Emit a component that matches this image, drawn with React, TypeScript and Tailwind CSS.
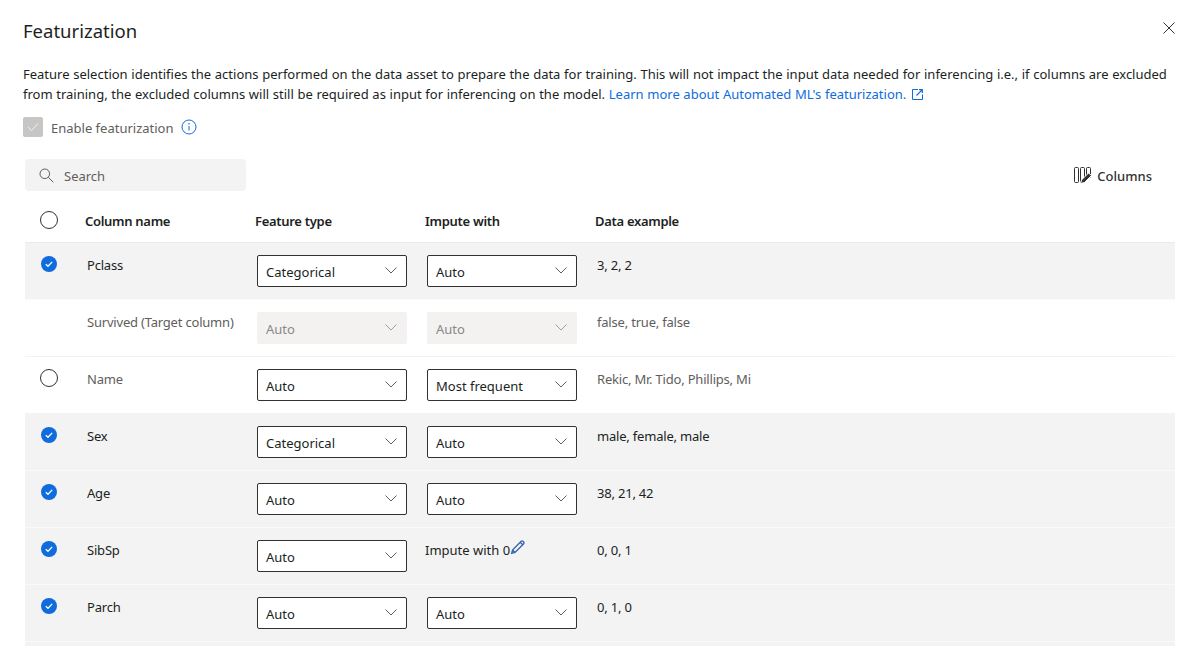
import React from "react";

const Chevron = () => (
  <svg width="12" height="7" viewBox="0 0 12 7" fill="none" className="-mt-[1px] block shrink-0">
    <path d="M.5.5l5.500 5.500 5.500-5.500" stroke="currentColor" strokeWidth="1" />
  </svg>
);

const Select = ({ value, disabled }: { value: string; disabled?: boolean }) => (
  <div
    className={
      disabled
        ? "flex h-[32px] w-[150px] items-center justify-between rounded-[2px] bg-[#f3f2f1] pl-[9px] pr-[10px] text-[#8a8886]"
        : "flex h-[32px] w-[150px] items-center justify-between rounded-[2px] border border-[#323130] bg-white pl-[8px] pr-[9px] text-[#201f1e]"
    }
  >
    <span className="mt-[3px]">{value}</span>
    <span className={disabled ? "text-[#a19f9d]" : "text-[#605e5c]"}>
      <Chevron />
    </span>
  </div>
);

const Checked = () => (
  <svg width="16" height="16" viewBox="0 0 16 16" className="block">
    <circle cx="8" cy="8" r="8" fill="#0f6cdd" />
    <path d="M4.800 8.200l2.200 2.100 4.200-4.400" fill="none" stroke="#fff" strokeWidth="1.300" />
  </svg>
);

const Unchecked = () => (
  <span className="block h-[18px] w-[18px] rounded-full border border-[#323130] bg-white" />
);

type Row = {
  name: string;
  type: string;
  impute: string;
  data: string;
  state: "on" | "off" | "target";
};

const rows: Row[] = [
  { name: "Pclass", type: "Categorical", impute: "Auto", data: "3, 2, 2", state: "on" },
  { name: "Survived (Target column)", type: "Auto", impute: "Auto", data: "false, true, false", state: "target" },
  { name: "Name", type: "Auto", impute: "Most frequent", data: "Rekic, Mr. Tido, Phillips, Mi", state: "off" },
  { name: "Sex", type: "Categorical", impute: "Auto", data: "male, female, male", state: "on" },
  { name: "Age", type: "Auto", impute: "Auto", data: "38, 21, 42", state: "on" },
  { name: "SibSp", type: "Auto", impute: "edit", data: "0, 0, 1", state: "on" },
  { name: "Parch", type: "Auto", impute: "Auto", data: "0, 1, 0", state: "on" },
];

const TableRow = ({ row }: { row: Row }) => {
  const on = row.state === "on";
  const target = row.state === "target";
  return (
    <div
      className={
        on
          ? "flex h-[57px] border-b border-[#fafafa] bg-[#f3f3f3] text-[#201f1e]"
          : "flex h-[57px] border-b border-[#f3f2f1] bg-white text-[#605e5c]"
      }
    >
      <div className="flex w-[60px] justify-center pt-[13px] pr-[12px]">
        {on && <Checked />}
        {row.state === "off" && (
          <span className="-mt-[1px]">
            <Unchecked />
          </span>
        )}
      </div>
      <div className="w-[170px] pl-[2px] pt-[12px] leading-[20px] tracking-[-0.2px]">{row.name}</div>
      <div className="w-[170px] pl-[2px] pt-[12px]">
        <Select value={row.type} disabled={target} />
      </div>
      <div className="w-[170px] pl-[2px] pt-[12px]">
        {row.impute === "edit" ? (
          <div className="-ml-[2px] flex items-start leading-[20px] text-[#201f1e]">
            <span>Impute with 0</span>
            <svg width="16" height="16" viewBox="0 0 16 16" fill="none" className="-mt-[1px]">
              <path
                d="M1.700 14.300l.8-3.300 8.700-8.700a1.300 1.300 0 0 1 1.800 0l.7.7a1.300 1.300 0 0 1 0 1.800L5 13.500l-3.300.8zM2.500 11L5 13.500M10.200 3.300l2.500 2.500"
                stroke="#2f62a8"
                strokeWidth="1.300"
              />
            </svg>
          </div>
        ) : (
          <Select value={row.impute} disabled={target} />
        )}
      </div>
      <div className="pl-[2px] pt-[12px] leading-[20px] tracking-[-0.2px]">{row.data}</div>
    </div>
  );
};

export default function App() {
  return (
    <div
      className="h-[646px] w-[1195px] overflow-hidden bg-white text-[13px] text-[#201f1e]"
      style={{ fontFamily: '"Noto Sans", sans-serif' }}
    >
      <div className="flex items-start justify-between pl-[23px] pr-[20px] pt-[17px]">
        <h1 className="text-[18.5px] leading-[28px] text-[#201f1e]">Featurization</h1>
        <svg width="12" height="12" viewBox="0 0 12 12" className="mt-[5px]">
          <path d="M.5.5l11 11M11.500.5l-11 11" stroke="#323130" strokeWidth="1" />
        </svg>
      </div>

      <p className="mt-[19px] w-[1172px] pl-[23px] leading-[20px] [word-spacing:0.28px]">
        Feature selection identifies the actions performed on the data asset to prepare the data for training. This will not impact the input data needed for inferencing i.e., if columns are excluded from training, the excluded columns will still be required as input for inferencing on the model.{" "}
        <span className="text-[#0f6cdd]">
          Learn more about Automated ML's featurization.
          <svg width="11" height="11" viewBox="0 0 11 11" fill="none" className="ml-[6px] inline-block align-[-1px]">
            <path d="M6 .5H.5v10h10V5.500" stroke="#0f6cdd" strokeWidth="1" />
            <path d="M7 .7h3.300V4M10.300.7L4.500 6.500" stroke="#0f6cdd" strokeWidth="1.200" />
          </svg>
        </span>
      </p>

      <div className="mt-[13px] flex h-[20px] items-center pl-[23px]">
        <span className="flex h-[20px] w-[20px] items-center justify-center rounded-[2px] bg-[#c8c6c4]">
          <svg width="12" height="10" viewBox="0 0 12 10" fill="none">
            <path d="M1 5l3.500 3.500L11 1.500" stroke="#f3f2f1" strokeWidth="1" />
          </svg>
        </span>
        <span className="ml-[8px] mt-[4px] text-[#605e5c]">Enable featurization</span>
        <svg width="16" height="16" viewBox="0 0 16 16" fill="none" className="ml-[7px]">
          <circle cx="8" cy="8" r="7" stroke="#0f6cdd" strokeWidth="1" />
          <path d="M8 7v4.500" stroke="#0f6cdd" strokeWidth="1" />
          <circle cx="8" cy="4.800" r=".8" fill="#0f6cdd" />
        </svg>
      </div>

      <div className="mt-[22px] flex h-[32px] items-center justify-between pl-[25px] pr-[43px]">
        <div className="flex h-[32px] w-[221px] items-center rounded-[4px] bg-[#f3f3f3] pl-[14px] text-[#605e5c]">
          <svg width="15" height="15" viewBox="0 0 15 15" fill="none">
            <circle cx="5.800" cy="5.800" r="4.800" stroke="#605e5c" strokeWidth="1" />
            <path d="M9.300 9.300l5 5" stroke="#605e5c" strokeWidth="1" />
          </svg>
          <span className="ml-[10px] mt-[4px]">Search</span>
        </div>
        <div className="flex items-center font-medium text-[#323130]">
          <svg width="18" height="17" viewBox="0 0 18 17" fill="none">
            <rect x=".5" y=".5" width="4" height="15" rx="1" stroke="#323130" />
            <rect x="6.500" y=".5" width="4" height="15" rx="1" stroke="#323130" />
            <rect x="12.500" y=".5" width="4" height="10" rx="1" stroke="#323130" />
            <path d="M6.500 16.500l1-3.500 7-7 3 2.500-7 7z" fill="#323130" stroke="#fff" strokeWidth="1" />
          </svg>
          <span className="ml-[5px] mt-[4px]">Columns</span>
        </div>
      </div>

      <div className="ml-[25px] w-[1150px]">
        <div className="flex h-[52px] items-center border-b border-[#edebe9] pb-[1px] pt-[8px] font-semibold tracking-[-0.3px] text-[#201f1e]">
          <div className="flex w-[60px] justify-center pr-[12px]">
            <Unchecked />
          </div>
          <div className="w-[170px] pt-[4px]">Column name</div>
          <div className="w-[170px] pt-[4px]">Feature type</div>
          <div className="w-[170px] pt-[4px]">Impute with</div>
          <div className="pt-[4px]">Data example</div>
        </div>
        {rows.map((r) => (
          <TableRow key={r.name} row={r} />
        ))}
        <div className="h-[20px] bg-[#f3f3f3]" />
      </div>
    </div>
  );
}
